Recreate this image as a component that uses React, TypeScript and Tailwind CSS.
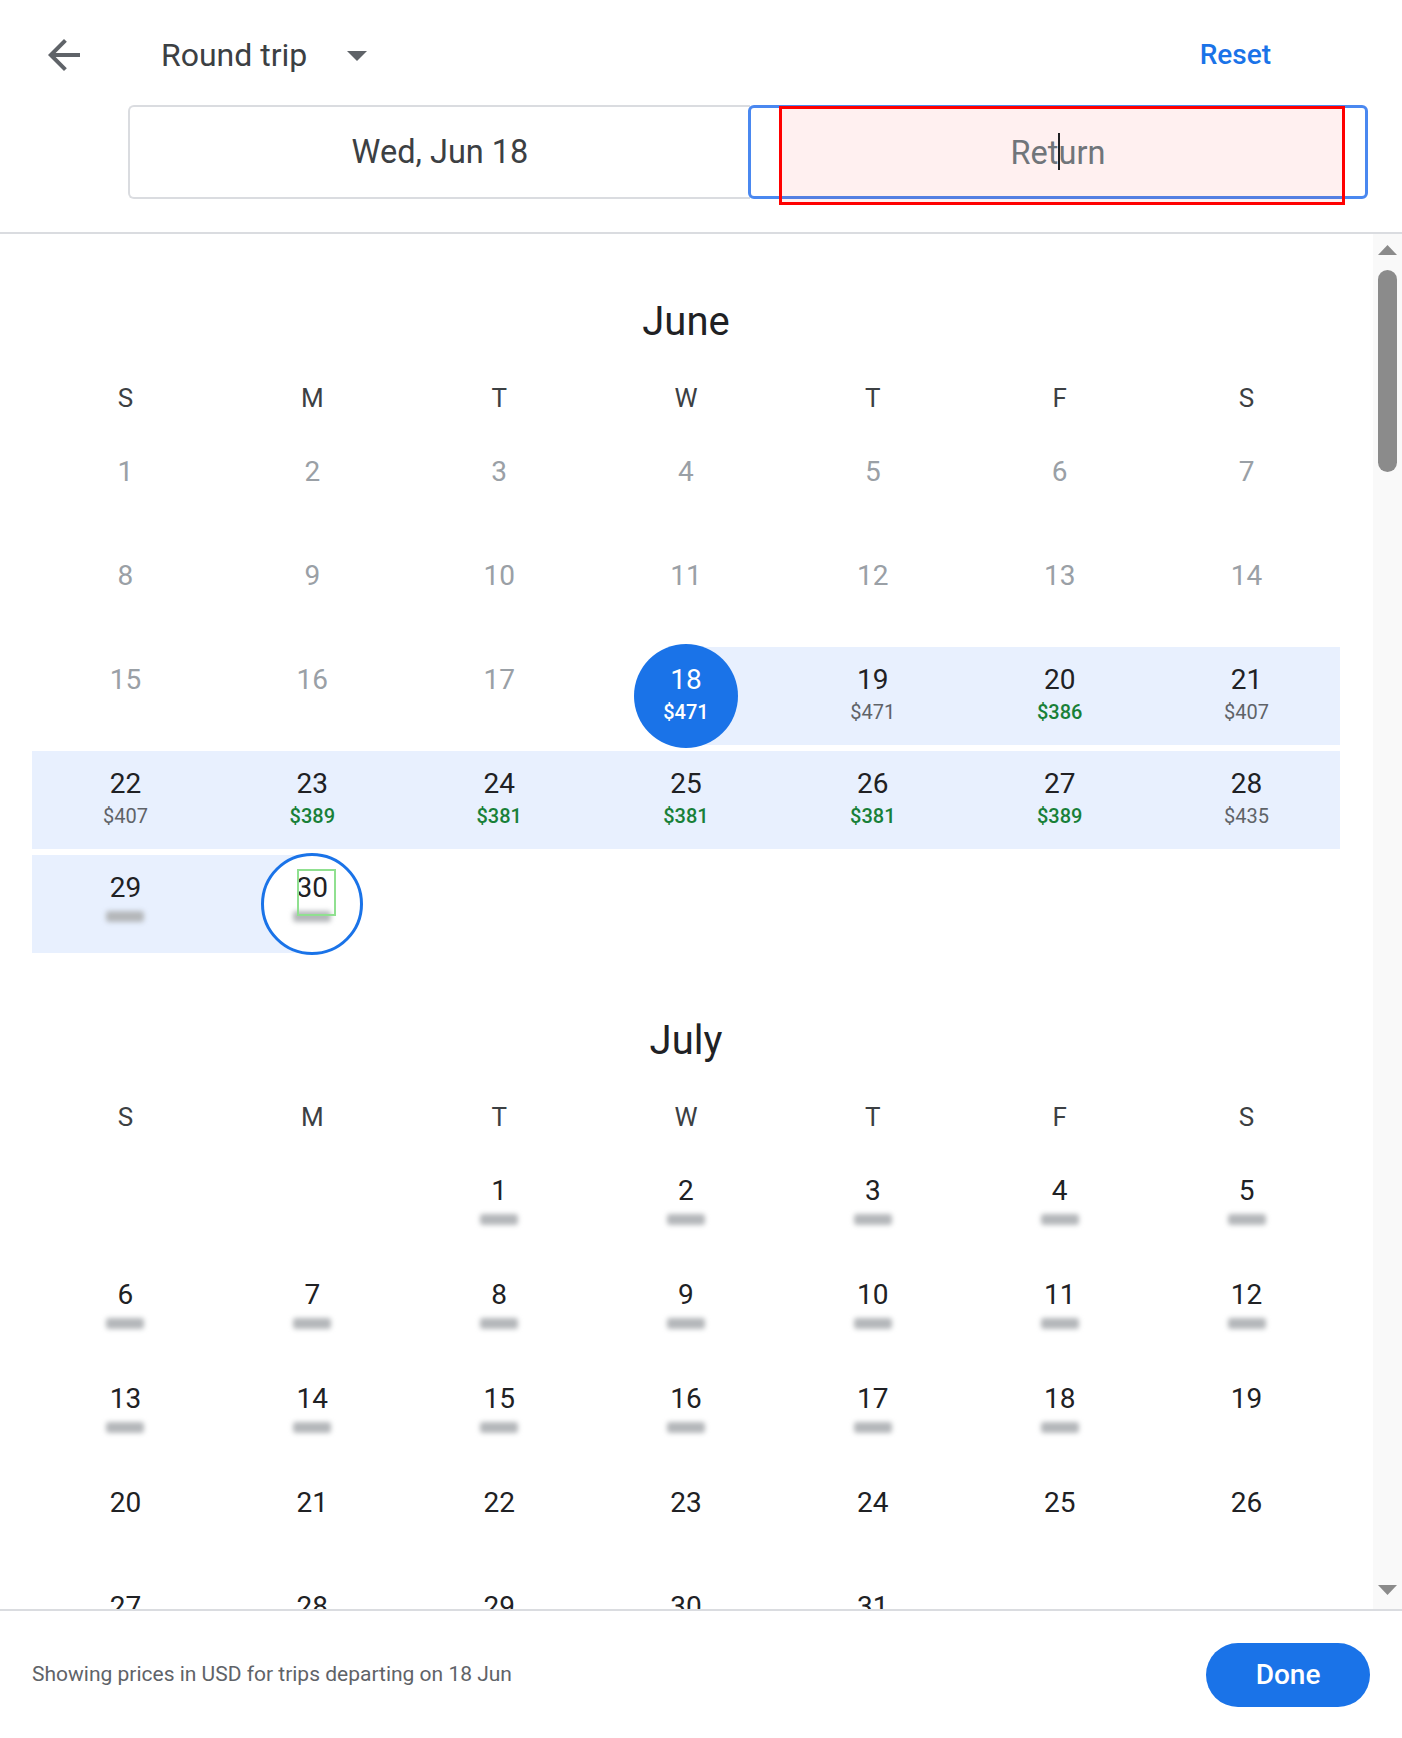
import React from "react"

type Band = "full" | "left" | "right" | null

interface Day {
  n: number
  price?: string
  tone?: "green" | "gray" | "white"
  blur?: boolean
  off?: boolean
  band?: Band
  mark?: "filled" | "ring"
  focus?: boolean
}

const WEEK = ["S", "M", "T", "W", "T", "F", "S"]

const junePrices: Record<number, [string, "green" | "gray" | "white"]> = {
  18: ["$471", "white"],
  19: ["$471", "gray"],
  20: ["$386", "green"],
  21: ["$407", "gray"],
  22: ["$407", "gray"],
  23: ["$389", "green"],
  24: ["$381", "green"],
  25: ["$381", "green"],
  26: ["$381", "green"],
  27: ["$389", "green"],
  28: ["$435", "gray"],
}

const june: (Day | null)[] = Array.from({ length: 30 }, (_, i) => {
  const n = i + 1
  const p = junePrices[n]
  let band: Band = null
  if (n === 18) band = "right"
  else if (n > 18 && n < 30) band = "full"
  else if (n === 30) band = "left"
  return {
    n,
    off: n < 18,
    price: p?.[0],
    tone: p?.[1],
    blur: n >= 29,
    band,
    mark: n === 18 ? "filled" : n === 30 ? "ring" : undefined,
    focus: n === 30,
  }
})

const july: (Day | null)[] = [
  null,
  null,
  ...Array.from({ length: 31 }, (_, i) => ({ n: i + 1, blur: i + 1 < 19 })),
]

const DayCell = ({ d }: { d: Day | null }) => {
  if (!d) return <div className="h-[98px]" />

  const bandCls =
    d.band === "full"
      ? "bg-[#e8f0fe]"
      : d.band === "right"
        ? "bg-[linear-gradient(to_right,transparent_50%,#e8f0fe_50%)]"
        : d.band === "left"
          ? "bg-[linear-gradient(to_right,#e8f0fe_50%,transparent_50%)]"
          : ""

  const numCls =
    d.mark === "filled" ? "text-white" : d.off ? "text-[#9aa0a6]" : "text-[#202124]"

  const priceCls =
    d.tone === "white"
      ? "text-white font-medium"
      : d.tone === "green"
        ? "text-[#188038] font-medium"
        : "text-[#5f6368]"

  return (
    <div className={`relative h-[98px] ${bandCls}`}>
      {d.mark === "filled" && (
        <div className="absolute left-1/2 top-1/2 h-[104px] w-[104px] -translate-x-1/2 -translate-y-1/2 rounded-full bg-[#1a73e8]" />
      )}
      {d.mark === "ring" && (
        <div className="absolute left-1/2 top-1/2 h-[102px] w-[102px] -translate-x-1/2 -translate-y-1/2 rounded-full border-[3px] border-[#1a73e8] bg-white" />
      )}
      <div className="relative flex flex-col items-center">
        <span className={`mt-[17px] h-[32px] text-[28px] leading-[32px] ${numCls}`}>{d.n}</span>
        {d.price && (
          <span className={`mt-[4px] h-[24px] text-[20px] leading-[24px] ${priceCls}`}>{d.price}</span>
        )}
        {d.blur && <span className="mt-[7px] h-[11px] w-[38px] rounded-[3px] bg-[#b4b7ba] blur-[2.5px]" />}
      </div>
      {/* annotation box */}
      {d.focus && (
        <div className="absolute left-[78px] top-[14px] h-[47px] w-[39px] border-2 border-[#90e090]" />
      )}
    </div>
  )
}

const Month = ({ name, days }: { name: string; days: (Day | null)[] }) => (
  <div className="pt-[64px]">
    <div className="h-[48px] text-center text-[40px] leading-[48px] text-[#202124]">{name}</div>
    <div className="mt-[32px] grid h-[40px] grid-cols-7 items-center text-center text-[26px] text-[#3c4043]">
      {WEEK.map((w, i) => (
        <span key={i}>{w}</span>
      ))}
    </div>
    <div className="mt-[21px] grid grid-cols-7 gap-y-[6px]">
      {days.map((d, i) => (
        <DayCell key={i} d={d} />
      ))}
    </div>
  </div>
)

export default function App() {
  return (
    <div className="flex h-[1738px] w-full flex-col overflow-hidden bg-white font-[Roboto,sans-serif]">
      {/* Header */}
      <div className="shrink-0 border-b-2 border-[#dadce0] pb-[33px] pt-[10px]">
        <div className="flex h-[90px] items-center pl-[40px] pr-[131px]">
          <svg viewBox="0 0 24 24" className="h-[48px] w-[48px] fill-[#5f6368]">
            <path d="M20 11H7.83l5.59-5.59L12 4l-8 8 8 8 1.41-1.41L7.83 13H20v-2z" />
          </svg>
          <span className="ml-[73px] text-[32px] text-[#3c4043]">Round trip</span>
          <svg viewBox="0 0 20 10" className="ml-[40px] mt-[2px] h-[10px] w-[20px] fill-[#5f6368]">
            <path d="M0 0l10 10 10-10z" />
          </svg>
          <span className="ml-auto text-[28px] font-medium text-[#1a73e8]">Reset</span>
        </div>

        <div className="ml-[128px] mr-[34px] mt-[5px] flex h-[94px]">
          <div className="flex w-[622px] items-center justify-center rounded-l-[6px] border-2 border-r-0 border-[#dadce0] text-[32.5px] text-[#3c4043]">
            Wed, Jun 18
          </div>
          <div className="relative -ml-[2px] flex flex-1 items-center justify-center rounded-[6px] border-[3px] border-[#4a88f0] text-[32.5px] text-[#70757a]">
            {/* annotation overlay */}
            <div className="absolute -top-[2px] left-[28px] h-[99px] w-[566px] border-[3px] border-[#ff0000] bg-[#ff0000]/[0.06]" />
            <span className="relative">
              Ret
              <span className="-mx-px inline-block h-[37px] w-[2px] translate-y-[6px] bg-[#202124]" />
              urn
            </span>
          </div>
        </div>
      </div>

      {/* Calendar */}
      <div className="flex min-h-0 flex-1">
        <div className="min-w-0 flex-1 overflow-hidden pl-[32px] pr-[33px]">
          <Month name="June" days={june} />
          <Month name="July" days={july} />
        </div>
        <div className="flex w-[29px] shrink-0 flex-col items-center bg-[#f9f9f9]">
          <svg viewBox="0 0 19 10" className="mt-[11px] h-[10px] w-[19px] fill-[#8b8b8b]">
            <path d="M0 10L9.5 0 19 10z" />
          </svg>
          <div className="mt-[15px] h-[202px] w-[19px] rounded-full bg-[#8b8b8b]" />
          <div className="flex-1" />
          <svg viewBox="0 0 19 10" className="mb-[14px] h-[10px] w-[19px] fill-[#8b8b8b]">
            <path d="M0 0l9.5 10L19 0z" />
          </svg>
        </div>
      </div>

      {/* Footer */}
      <div className="flex h-[129px] shrink-0 items-center justify-between border-t-2 border-[#dadce0] pl-[32px] pr-[32px]">
        <span className="text-[21px] text-[#5f6368]">Showing prices in USD for trips departing on 18 Jun</span>
        <button className="h-[64px] w-[164px] rounded-full bg-[#1a73e8] text-[28px] font-medium text-white">
          Done
        </button>
      </div>
    </div>
  )
}
